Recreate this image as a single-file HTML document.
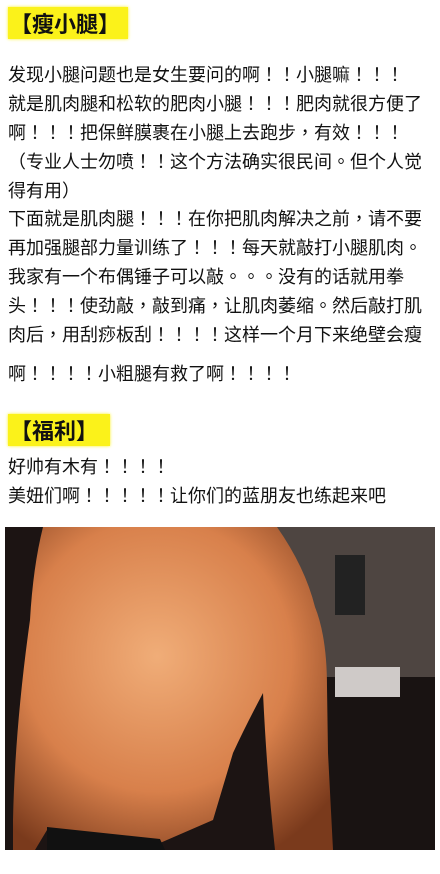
<!DOCTYPE html>
<html><head><meta charset="utf-8"><style>
body{margin:0;background:#fff;width:440px;height:874px;position:relative;overflow:hidden;font-family:"Noto Sans CJK TC","Liberation Sans",sans-serif;color:#111}
.t{position:absolute;background:#fbf21a;font-weight:bold;font-size:22px;line-height:32px;height:32px;padding-left:2px;box-shadow:0 0 3px #fbf21a;font-family:"Noto Sans CJK SC",sans-serif}
.l{position:absolute;left:8px;font-size:18px;white-space:nowrap;line-height:20px}
i{font-style:normal;display:inline-block;width:18px;text-align:center}
</style></head><body>
<div class="t" style="left:8px;top:7px;width:118px">【瘦小腿】</div>
<div class="l" style="top:64px">发现小腿问题也是女生要问的啊<i>！</i><i>！</i>小腿嘛<i>！</i><i>！</i><i>！</i></div>
<div class="l" style="top:93px">就是肌肉腿和松软的肥肉小腿<i>！</i><i>！</i><i>！</i>肥肉就很方便了</div>
<div class="l" style="top:122px">啊<i>！</i><i>！</i><i>！</i>把保鲜膜裹在小腿上去跑步<i>，</i>有效<i>！</i><i>！</i><i>！</i></div>
<div class="l" style="top:151px"><i>（</i>专业人士勿喷<i>！</i><i>！</i>这个方法确实很民间<i>。</i>但个人觉</div>
<div class="l" style="top:180px">得有用<i>）</i></div>
<div class="l" style="top:208px">下面就是肌肉腿<i>！</i><i>！</i><i>！</i>在你把肌肉解决之前<i>，</i>请不要</div>
<div class="l" style="top:237px">再加强腿部力量训练了<i>！</i><i>！</i><i>！</i>每天就敲打小腿肌肉<i>。</i></div>
<div class="l" style="top:266px">我家有一个布偶锤子可以敲<i>。</i><i>。</i><i>。</i>没有的话就用拳</div>
<div class="l" style="top:295px">头<i>！</i><i>！</i><i>！</i>使劲敲<i>，</i>敲到痛<i>，</i>让肌肉萎缩<i>。</i>然后敲打肌</div>
<div class="l" style="top:324px">肉后<i>，</i>用刮痧板刮<i>！</i><i>！</i><i>！</i><i>！</i>这样一个月下来绝壁会瘦</div>
<div class="l" style="top:363px">啊<i>！</i><i>！</i><i>！</i><i>！</i>小粗腿有救了啊<i>！</i><i>！</i><i>！</i><i>！</i></div>
<div class="t" style="left:8px;top:414px;width:100px">【福利】</div>
<div class="l" style="top:456px">好帅有木有<i>！</i><i>！</i><i>！</i><i>！</i></div>
<div class="l" style="top:485px">美妞们啊<i>！</i><i>！</i><i>！</i><i>！</i><i>！</i>让你们的蓝朋友也练起来吧</div>
<svg style="position:absolute;left:5px;top:527px" width="430" height="323" viewBox="0 0 430 323">
<defs>
<radialGradient id="s" cx="0.45" cy="0.4" r="0.7"><stop offset="0" stop-color="#f0ad78"/><stop offset="0.6" stop-color="#d8804b"/><stop offset="1" stop-color="#7a3a1c"/></radialGradient>
</defs>
<rect width="430" height="323" fill="#1c1413"/>
<rect x="272" y="0" width="158" height="150" fill="#4e4541"/>
<rect x="272" y="150" width="158" height="173" fill="#191312"/>
<rect x="330" y="140" width="65" height="30" fill="#cfcac8"/>
<rect x="330" y="28" width="30" height="60" fill="#222"/>
<path d="M38 0 L272 0 Q300 40 310 80 Q322 110 322 160 L323 226 L328 323 L270 323 Q262 250 258 166 Q240 200 228 226 L208 293 L155 316 L42 303 L30 323 L8 323 L8 293 Q10 200 25 93 Q28 40 38 0 Z" fill="url(#s)"/>
<path d="M42 300 L155 312 L160 323 L42 323 Z" fill="#111"/>
</svg>
</body></html>
